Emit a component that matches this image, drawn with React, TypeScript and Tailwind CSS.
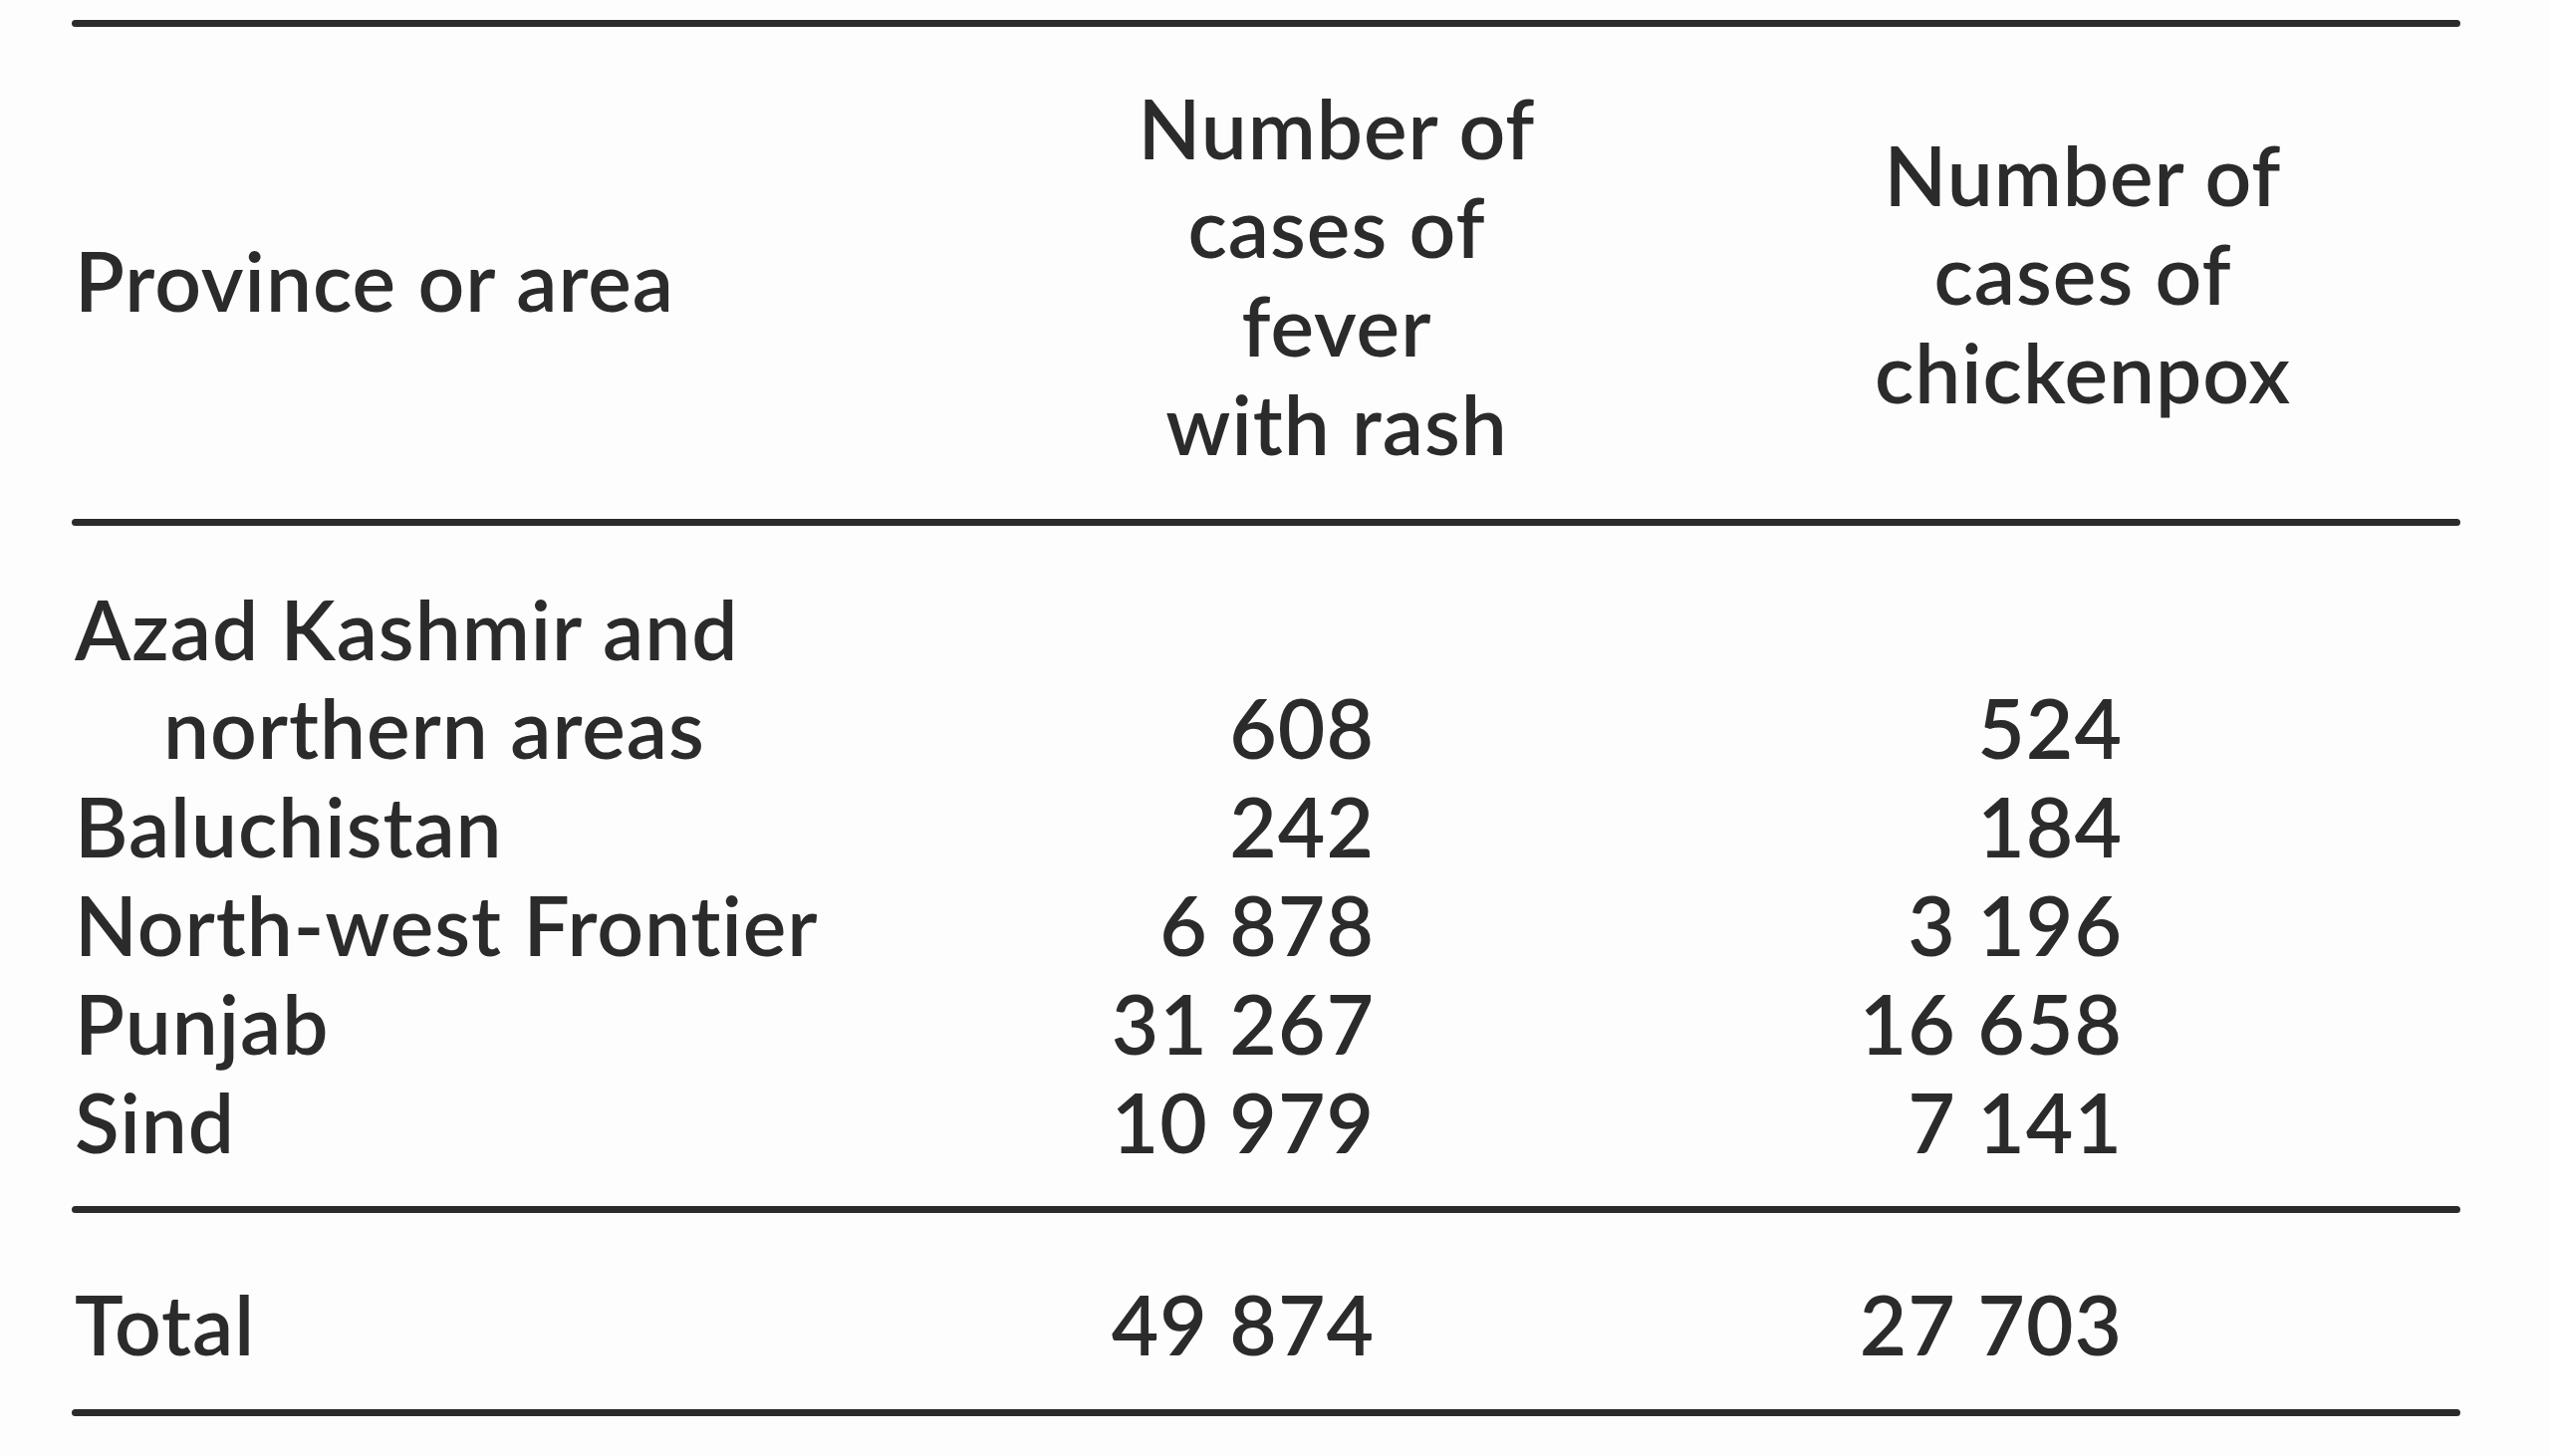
import React from "react";

const rows: { name: string; indent?: boolean; a: string; b: string }[] = [
  { name: "Azad Kashmir and", a: "", b: "" },
  { name: "northern areas", indent: true, a: "608", b: "524" },
  { name: "Baluchistan", a: "242", b: "184" },
  { name: "North-west Frontier", a: "6 878", b: "3 196" },
  { name: "Punjab", a: "31 267", b: "16 658" },
  { name: "Sind", a: "10 979", b: "7 141" },
];

function Rule() {
  return <div className="h-[7px] w-full rounded-full bg-[#2b2b2b]" />;
}

export default function App() {
  return (
    <div
      className="w-[2560px] h-[1462px] bg-[#fdfdfd] text-[#2b2b2b] overflow-hidden"
      style={{ fontFamily: "Lato, 'Open Sans', sans-serif" }}
    >
      <div className="ml-[72px] w-[2398px] pt-[20px] text-[82px] leading-[99px] tracking-[1px] font-semibold">
        <Rule />
        <div className="grid grid-cols-[1020px_500px_249px_500px] items-center h-[494px]">
          <div className="pl-[3px] pt-[14px]">Province or area</div>
          <div className="text-center pt-[6px]">
            <div>Number of</div>
            <div>cases of</div>
            <div>fever</div>
            <div>with rash</div>
          </div>
          <div />
          <div className="text-center">
            <div>Number of</div>
            <div>cases of</div>
            <div>chickenpox</div>
          </div>
        </div>
        <Rule />
        <div className="pt-[54px] pb-[35px]">
          {rows.map((r) => (
            <div key={r.name} className="grid grid-cols-[1020px_500px_249px_500px]">
              <div className={r.indent ? "pl-[92px]" : "pl-[3px]"}>{r.name}</div>
              <div className="text-right pr-[212px]">{r.a}</div>
              <div />
              <div className="text-right pr-[210px]">{r.b}</div>
            </div>
          ))}
        </div>
        <Rule />
        <div className="grid grid-cols-[1020px_500px_249px_500px] pt-[62px] pb-[36px]">
          <div className="pl-[3px]">Total</div>
          <div className="text-right pr-[212px]">49 874</div>
          <div />
          <div className="text-right pr-[210px]">27 703</div>
        </div>
        <Rule />
      </div>
    </div>
  );
}
